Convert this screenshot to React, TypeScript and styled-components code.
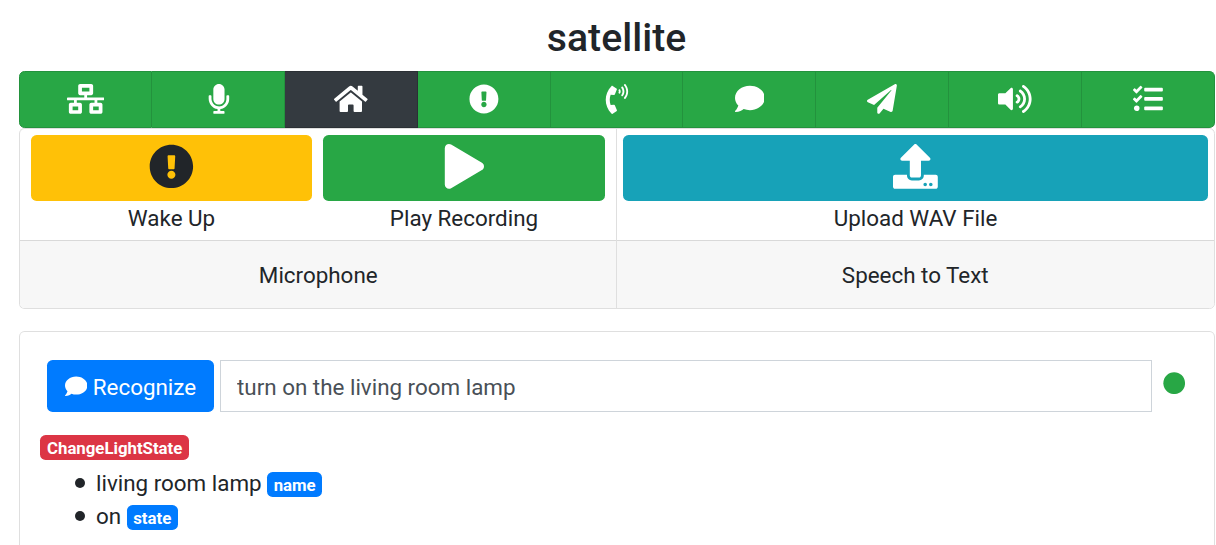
import React from 'react';
import styled, { createGlobalStyle, css } from 'styled-components';
import {
  FaNetworkWired,
  FaMicrophone,
  FaHome,
  FaExclamationCircle,
  FaPhoneVolume,
  FaComment,
  FaPaperPlane,
  FaVolumeUp,
  FaTasks,
  FaPlay,
  FaUpload,
  FaCircle,
} from 'react-icons/fa';

const GlobalStyle = createGlobalStyle`
  *, *::before, *::after { box-sizing: border-box; }
  html { font-size: 22.4px; }
  body {
    margin: 0;
    background: #fff;
    color: #212529;
    font-family: Roboto, "Liberation Sans", sans-serif;
    font-size: 1rem;
    line-height: 1.5;
  }
`;

const Page = styled.main`
  display: flex;
  flex-direction: column;
  height: 545px;
  padding: 15px 1px 0 19px;
  overflow: hidden;
`;

const Title = styled.h1`
  margin: 0;
  height: 56px;
  padding-right: 1px;
  font-size: 39.2px;
  line-height: 47px;
  font-weight: 500;
  text-align: center;
`;

const Nav = styled.nav`
  display: grid;
  grid-template-columns: repeat(4, 133fr) 132fr repeat(4, 133fr);
  height: 57px;
  flex: none;
`;

const NavButton = styled.button<{
  $active?: boolean;
  $iconWidth: number;
  $inset?: number;
}>`
  display: flex;
  align-items: center;
  justify-content: center;
  padding: 0 0 1.5px ${(p) => p.$inset ?? 0.5}px;
  color: #fff;
  font-size: 29.87px;
  background: ${(p) => (p.$active ? '#343a40' : '#28a745')};
  border: 1px solid ${(p) => (p.$active ? '#2b3035' : '#23923d')};
  border-left-width: 0;

  &:first-child { border-left-width: 1px; border-radius: 5.6px 0 0 5.6px; }
  &:last-child { border-radius: 0 5.6px 5.6px 0; }

  svg {
    flex: none;
    width: ${(p) => p.$iconWidth}em;
    height: 1em;
  }
`;

const CardGroup = styled.div`
  display: grid;
  grid-template-columns: 598fr 598fr;
  height: 181px;
  flex: none;
`;

const panelBorder = css`
  border: 1px solid #dfdfdf;
`;

const Card = styled.section`
  ${panelBorder}
  display: flex;
  flex-direction: column;
  overflow: hidden;

  &:first-child { border-right: 0; border-radius: 5.6px 0 0 5.6px; }
  &:last-child { margin-left: -1px; border-radius: 0 5.6px 5.6px 0; }
`;

const CardBody = styled.div<{ $left: number; $right: number }>`
  display: flex;
  gap: 11px;
  height: 111px;
  padding: 6px ${(p) => p.$right}px 0 ${(p) => p.$left}px;
`;

const Action = styled.div<{ $grow?: number }>`
  flex: ${(p) => p.$grow || 1} 1 0;
  display: flex;
  flex-direction: column;
  text-align: center;
`;

const ActionButton = styled.button<{ $bg: string; $fg?: string }>`
  display: flex;
  align-items: center;
  justify-content: center;
  height: 66px;
  margin-bottom: 1px;
  padding: 0 0 3px;
  border: 0;
  border-radius: 5.6px;
  font-size: 44.8px;
  background: ${(p) => p.$bg};
  color: ${(p) => p.$fg || '#fff'};
`;

const CardFooter = styled.footer`
  flex: 1;
  display: flex;
  align-items: center;
  justify-content: center;
  padding: 3px 0.5px 0 0;
  background: #f7f7f7;
  border-top: 1px solid #d9d9d9;
`;

const Panel = styled.section`
  ${panelBorder}
  flex: 1;
  margin-top: 22px;
  padding: 28px 28.6px 0 20px;
  border-bottom: 0;
  border-radius: 5.6px 5.6px 0 0;
`;

const Form = styled.form`
  display: flex;
  height: 52px;
  padding-left: 7px;
`;

const Recognize = styled.button`
  display: flex;
  align-items: center;
  justify-content: center;
  gap: 5.5px;
  width: 167px;
  padding: 3px 0 0;
  border: 0;
  border-radius: 5.6px;
  background: #007bff;
  color: #fff;
  font: inherit;

  svg { margin-top: -2px; }
`;

const Sentence = styled.input`
  flex: 1;
  min-width: 0;
  margin: 0 11px 0 6px;
  padding: 3px 16px 0;
  border: 1px solid #ced4da;
  background: #fff;
  color: #495057;
  font: inherit;
  outline: 0;
`;

const Status = styled.span`
  display: flex;
  margin-top: 11.6px;
  color: #28a745;
`;

const Badge = styled.span<{ $bg: string }>`
  display: inline-block;
  padding: 5px 6.5px 3px;
  border-radius: 5.6px;
  background: ${(p) => p.$bg};
  color: #fff;
  font-size: 75%;
  font-weight: 700;
  line-height: 17px;
  vertical-align: baseline;
`;

const Intent = styled.div`
  display: flex;
  height: 33px;
  margin-top: 17px;
  padding-top: 6px;

  ${Badge} {
    height: 25px;
    padding: 5px 7px 3px;
  }
`;

const Slots = styled.ul`
  margin: 5px 0 0;
  padding-left: 56px;
  list-style: none;
`;

const Slot = styled.li`
  height: 33px;
  line-height: 33px;

  &::before {
    content: '';
    display: inline-block;
    width: 10px;
    height: 10px;
    margin: 0 10.6px 0 -20.6px;
    border-radius: 50%;
    background: #212529;
    vertical-align: 3px;
  }
`;

const navItems = [
  { Icon: FaNetworkWired, width: 1.25 },
  { Icon: FaMicrophone, width: 1, inset: 1 },
  { Icon: FaHome, width: 1.125 },
  { Icon: FaExclamationCircle, width: 1 },
  { Icon: FaPhoneVolume, width: 1 },
  { Icon: FaComment, width: 1, inset: 1 },
  { Icon: FaPaperPlane, width: 1 },
  { Icon: FaVolumeUp, width: 1.125 },
  { Icon: FaTasks, width: 1 },
];

const slots = [
  { value: 'living room lamp', name: 'name' },
  { value: 'on', name: 'state' },
];

export default function App() {
  return (
    <>
      <GlobalStyle />
      <Page>
        <Title>satellite</Title>
        <Nav>
          {navItems.map(({ Icon, width, inset }, i) => (
            <NavButton
              key={i}
              $active={i === 2}
              $iconWidth={width}
              $inset={inset}
            >
              <Icon />
            </NavButton>
          ))}
        </Nav>
        <CardGroup>
          <Card>
            <CardBody $left={11} $right={12}>
              <Action $grow={281}>
                <ActionButton $bg="#ffc107" $fg="#212529">
                  <FaExclamationCircle />
                </ActionButton>
                Wake Up
              </Action>
              <Action $grow={282}>
                <ActionButton $bg="#28a745">
                  <FaPlay />
                </ActionButton>
                Play Recording
              </Action>
            </CardBody>
            <CardFooter>Microphone</CardFooter>
          </Card>
          <Card>
            <CardBody $left={6} $right={6}>
              <Action>
                <ActionButton $bg="#17a2b8">
                  <FaUpload />
                </ActionButton>
                Upload WAV File
              </Action>
            </CardBody>
            <CardFooter>Speech to Text</CardFooter>
          </Card>
        </CardGroup>
        <Panel>
          <Form onSubmit={(e) => e.preventDefault()}>
            <Recognize>
              <FaComment />
              Recognize
            </Recognize>
            <Sentence defaultValue="turn on the living room lamp" />
            <Status>
              <FaCircle />
            </Status>
          </Form>
          <Intent>
            <Badge $bg="#dc3545">ChangeLightState</Badge>
          </Intent>
          <Slots>
            {slots.map((s) => (
              <Slot key={s.name}>
                {s.value} <Badge $bg="#007bff">{s.name}</Badge>
              </Slot>
            ))}
          </Slots>
        </Panel>
      </Page>
    </>
  );
}
